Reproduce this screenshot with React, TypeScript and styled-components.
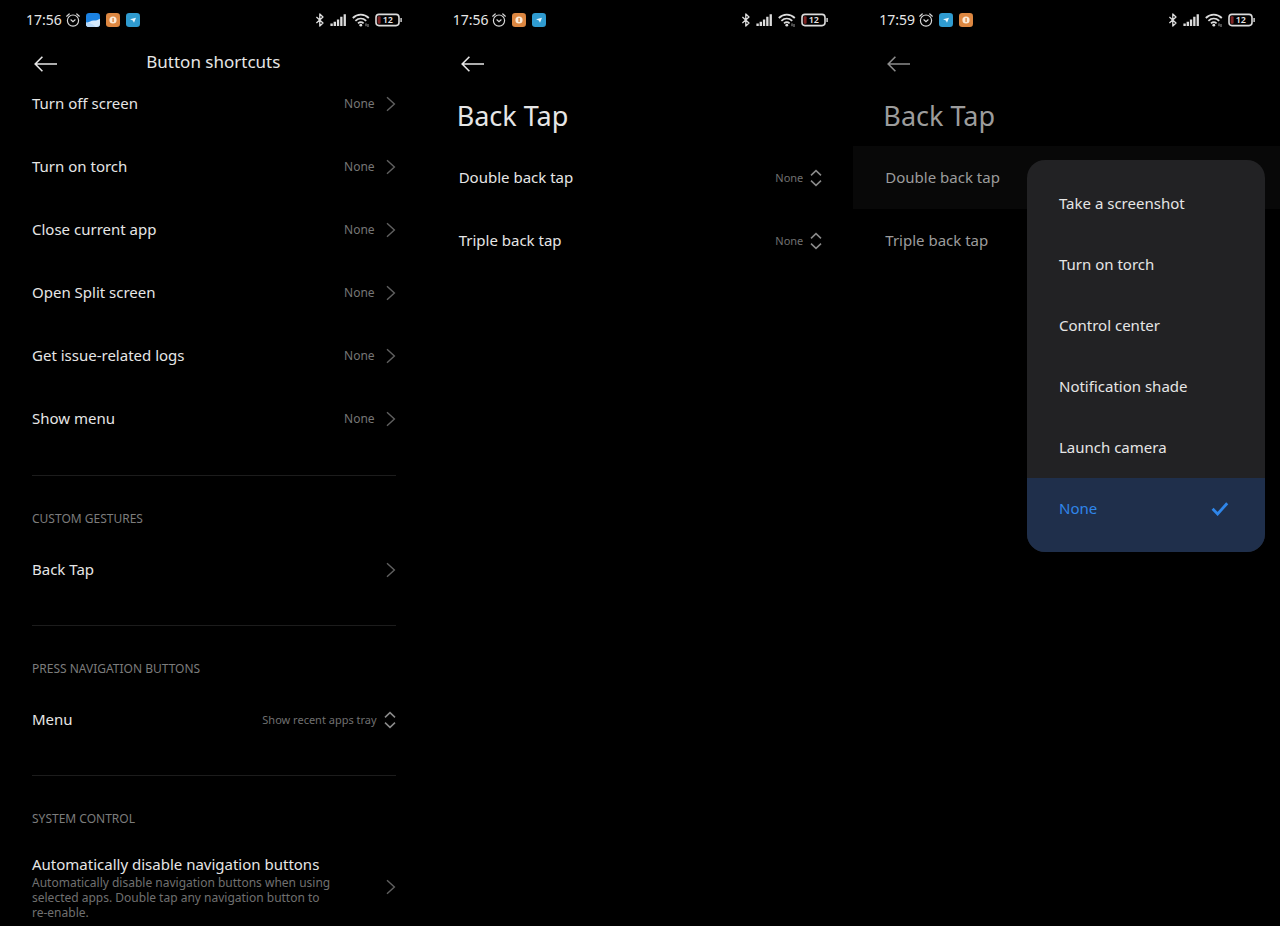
import React from "react";
import styled, { createGlobalStyle } from "styled-components";

const GlobalStyle = createGlobalStyle`
  * { box-sizing: border-box; }
  body {
    margin: 0;
    background: #000;
    color: #e6e6e6;
    font-family: "Noto Sans", "Open Sans", sans-serif;
    font-size: 15px;
    line-height: 21px;
  }
  button, select {
    font: inherit;
    color: inherit;
    background: none;
    border: 0;
    padding: 0;
    margin: 0;
  }
  a { color: inherit; text-decoration: none; }
  h1, h2, p, ul { margin: 0; padding: 0; font-weight: 400; }
  ul { list-style: none; }
`;

const Page = styled.div`
  display: grid;
  grid-template-columns: repeat(3, minmax(0, 1fr));
  min-height: 100vh;
`;

const Screen = styled.main`
  display: flex;
  flex-direction: column;
`;

const StatusBar = styled.div`
  display: flex;
  align-items: center;
  justify-content: space-between;
  height: 39px;
  padding: 0 24px 0 26px;
`;

const StatusGroup = styled.div<{ $gap: number }>`
  display: flex;
  align-items: center;
  gap: ${(p) => p.$gap}px;
  svg { display: block; }
`;

const Time = styled.time`
  font-size: 14px;
  line-height: 20px;
`;

const Header = styled.header<{ $dim?: boolean }>`
  display: grid;
  grid-template-columns: 28px 1fr 28px;
  align-items: center;
  height: 33px;
  padding: 12px 32px 0;
  color: ${(p) => (p.$dim ? "#8c8c8c" : "#e6e6e6")};
`;

const BackButton = styled.button`
  display: flex;
  align-items: center;
  height: 22px;
  padding-top: 3px;
`;

const HeaderTitle = styled.h1`
  font-size: 17px;
  line-height: 22px;
  text-align: center;
`;

const LargeTitle = styled.h1<{ $dim?: boolean }>`
  height: 74px;
  padding: 25px 30px 0;
  font-size: 27px;
  line-height: 38px;
  color: ${(p) => (p.$dim ? "#9c9c9c" : "#e6e6e6")};
`;

const Row = styled.div<{ $dim?: boolean; $pressed?: boolean }>`
  position: relative;
  display: flex;
  align-items: center;
  justify-content: space-between;
  height: 63px;
  padding: 0 31px 0 32px;
  color: ${(p) => (p.$dim ? "#9c9c9c" : "#e6e6e6")};
  background: ${(p) => (p.$pressed ? "#080808" : "transparent")};
`;

const ShortcutList = styled.nav`
  padding-bottom: 1px;
`;

const RowLink = styled.a`
  display: flex;
  align-items: center;
  justify-content: space-between;
  min-height: 63px;
  padding: 0 31px 0 32px;
`;

const TallRowLink = styled(RowLink)`
  padding-top: 16px;
  padding-bottom: 4px;
`;

const Value = styled.span`
  display: flex;
  align-items: center;
  gap: 11px;
  font-size: 12px;
  color: #767676;
`;

const Picker = styled.span`
  display: flex;
  align-items: center;
  gap: 7px;
  font-size: 11px;
  color: #707070;
  svg { color: #8a8a8a; }
`;

const Select = styled.select`
  width: 160px;
  appearance: none;
  text-align-last: right;
  outline: none;
`;

const Divider = styled.hr`
  width: calc(100% - 63px);
  height: 1px;
  margin: 24px 31px 0 32px;
  border: 0;
  background: #1c1c1c;
`;

const SectionTitle = styled.h2`
  height: 62px;
  padding: 34px 32px 0;
  font-size: 12px;
  line-height: 18px;
  color: #7c7c7c;
`;

const Description = styled.p`
  max-width: 304px;
  font-size: 12px;
  line-height: 15px;
  color: #707070;
`;

const Menu = styled.ul`
  position: absolute;
  z-index: 1;
  top: 14px;
  right: 15px;
  width: 238px;
  padding-top: 13px;
  overflow: hidden;
  border-radius: 18px;
  background: #222224;
  color: #e6e6e6;
`;

const MenuItem = styled.li<{ $selected?: boolean }>`
  padding-bottom: ${(p) => (p.$selected ? 13 : 0)}px;
  background: ${(p) => (p.$selected ? "#1f2f4b" : "transparent")};
  color: ${(p) => (p.$selected ? "#2f86ea" : "inherit")};
`;

const MenuButton = styled.button`
  display: flex;
  align-items: center;
  justify-content: space-between;
  width: 100%;
  height: 61px;
  padding: 0 36px 0 32px;
  text-align: left;
`;

const AlarmIcon = () => (
  <svg width="14" height="14" viewBox="0 0 14 14" fill="none" stroke="#d8d8d8" strokeWidth="1.2" strokeLinecap="round">
    <circle cx="7" cy="7.6" r="5.6" />
    <path d="M4.9 6.8 7 8.7 9.1 6.8M.7 3.2 3.2 1M13.3 3.2 10.8 1" />
  </svg>
);

const GalleryIcon = () => (
  <svg width="14" height="14" viewBox="0 0 14 14">
    <rect width="14" height="14" rx="3.2" fill="#1b82e2" />
    <path d="M0 9.6C3 10 5 7.4 8 7.6c2.4 0 3.6-.4 6-1.8v5A3.2 3.2 0 0 1 10.8 14H3.2A3.2 3.2 0 0 1 0 10.8z" fill="#d5e9fb" />
    <path d="M0 9.6c3 .6 6 .4 9.5 4.4H3.2A3.2 3.2 0 0 1 0 10.8z" fill="#b9d9f8" />
  </svg>
);

const CoinIcon = () => (
  <svg width="14" height="14" viewBox="0 0 14 14">
    <rect width="14" height="14" rx="3.2" fill="#dd8741" />
    <circle cx="7" cy="7" r="3.6" fill="#fbe9d6" />
    <path d="M6.4 5h1.4v4H6.4z" fill="#dd8741" />
  </svg>
);

const TelegramIcon = () => (
  <svg width="14" height="14" viewBox="0 0 14 14">
    <rect width="14" height="14" rx="3.2" fill="#2f9bd0" />
    <path d="M4 6.2 10 4.8 8 9.8 6.8 7.4z" fill="#e6f5fc" />
  </svg>
);

const BluetoothIcon = () => (
  <svg width="10" height="14" viewBox="0 0 10 14" fill="none" stroke="#dcdcdc" strokeWidth="1.3" strokeLinejoin="round">
    <path d="M1.4 4 8 10 4.8 13V1L8 4 1.4 10" />
  </svg>
);

const SignalIcon = () => (
  <svg width="17" height="12" viewBox="0 0 17 12" fill="#dcdcdc">
    <path d="M.4 9.6h2.4V12H.4zM3.6 7.8H6V12H3.6zM6.9 5.4h2.3V12H6.9zM10.2 2.8h2.3V12h-2.3zM13.6.2h2.3V12h-2.3z" />
  </svg>
);

const WifiIcon = () => (
  <svg width="18" height="14" viewBox="0 0 18 14" fill="none" stroke="#dcdcdc" strokeWidth="1.8">
    <path d="M.8 5C5.4.6 12.2.6 16.8 5M3.4 7.8c3.2-3 7.6-3 10.8 0M6 10.4c1.7-1.5 3.9-1.5 5.6 0" />
    <circle cx="8.8" cy="12.2" r="1.4" fill="#dcdcdc" stroke="none" />
    <path d="M14 10.4v2.8M16 11v3" stroke="#9a9a9a" strokeWidth="1" />
  </svg>
);

const BatteryIcon = () => (
  <svg width="28" height="14" viewBox="0 0 28 14">
    <rect x="1" y="1.4" width="23" height="11.2" rx="3" fill="none" stroke="#dcdcdc" strokeWidth="1.6" />
    <path d="M25.4 5h1.4v4h-1.4z" fill="#dcdcdc" />
    <rect x="2.6" y="3.2" width="3" height="7.6" rx="1" fill="#7c2222" />
    <text x="12.8" y="10.4" textAnchor="middle" fontFamily="Noto Sans, sans-serif" fontSize="9" fontWeight="600" fill="#e6e6e6">
      12
    </text>
  </svg>
);

const ArrowLeft = () => (
  <svg width="25" height="16" viewBox="0 0 25 16" fill="none" stroke="currentColor" strokeWidth="1.6">
    <path d="M10.4.8 3.2 8l7.2 7.2M3.4 8H25" />
  </svg>
);

const ChevronRight = () => (
  <svg width="10" height="16" viewBox="0 0 10 16" fill="none" stroke="#606060" strokeWidth="1.4">
    <path d="M1 1.2 8.4 8 1 14.8" />
  </svg>
);

const UpDown = () => (
  <svg width="12" height="18" viewBox="0 0 12 18" fill="none" stroke="currentColor" strokeWidth="1.5">
    <path d="M1 6.4 6 1.6l5 4.8M1 11.6l5 4.8 5-4.8" />
  </svg>
);

const CheckIcon = () => (
  <svg width="18" height="14" viewBox="0 0 18 14" fill="none" stroke="#2f86ea" strokeWidth="2.8">
    <path d="M1.6 6.8 6.6 12 16.2 1.2" />
  </svg>
);

const appIcons = { gallery: GalleryIcon, coin: CoinIcon, telegram: TelegramIcon };

function Status({ time, apps }: { time: string; apps: (keyof typeof appIcons)[] }) {
  return (
    <StatusBar>
      <StatusGroup $gap={4}>
        <Time>{time}</Time>
        <StatusGroup $gap={6}>
          <AlarmIcon />
          {apps.map((name) => {
            const Icon = appIcons[name];
            return <Icon key={name} />;
          })}
        </StatusGroup>
      </StatusGroup>
      <StatusGroup $gap={5}>
        <BluetoothIcon />
        <SignalIcon />
        <WifiIcon />
        <BatteryIcon />
      </StatusGroup>
    </StatusBar>
  );
}

function TopBar({ title, dim }: { title?: string; dim?: boolean }) {
  return (
    <Header $dim={dim}>
      <BackButton type="button" aria-label="Back">
        <ArrowLeft />
      </BackButton>
      {title && <HeaderTitle>{title}</HeaderTitle>}
    </Header>
  );
}

function PickerRow({ id, label, value, dim }: { id: string; label: string; value: string; dim?: boolean }) {
  return (
    <Row $dim={dim}>
      <label htmlFor={id}>{label}</label>
      <Picker>
        <Select id={id} defaultValue={value}>
          <option value={value}>{value}</option>
        </Select>
        <UpDown />
      </Picker>
    </Row>
  );
}

const shortcuts = [
  "Turn off screen",
  "Turn on torch",
  "Close current app",
  "Open Split screen",
  "Get issue-related logs",
  "Show menu",
];

const actions = ["Take a screenshot", "Turn on torch", "Control center", "Notification shade", "Launch camera", "None"];

export default function App() {
  return (
    <>
      <GlobalStyle />
      <Page>
        <Screen>
          <Status time="17:56" apps={["gallery", "coin", "telegram"]} />
          <TopBar title="Button shortcuts" />
          <ShortcutList>
            {shortcuts.map((label) => (
              <RowLink href="#" key={label}>
                <span>{label}</span>
                <Value>
                  None
                  <ChevronRight />
                </Value>
              </RowLink>
            ))}
          </ShortcutList>
          <Divider />
          <SectionTitle>CUSTOM GESTURES</SectionTitle>
          <RowLink href="#">
            <span>Back Tap</span>
            <ChevronRight />
          </RowLink>
          <Divider />
          <SectionTitle>PRESS NAVIGATION BUTTONS</SectionTitle>
          <PickerRow id="menu-press" label="Menu" value="Show recent apps tray" />
          <Divider />
          <SectionTitle>SYSTEM CONTROL</SectionTitle>
          <TallRowLink href="#">
            <div>
              <div>Automatically disable navigation buttons</div>
              <Description>
                Automatically disable navigation buttons when using selected apps. Double tap any navigation button to
                re-enable.
              </Description>
            </div>
            <ChevronRight />
          </TallRowLink>
        </Screen>

        <Screen>
          <Status time="17:56" apps={["coin", "telegram"]} />
          <TopBar />
          <LargeTitle>Back Tap</LargeTitle>
          <PickerRow id="double-tap" label="Double back tap" value="None" />
          <PickerRow id="triple-tap" label="Triple back tap" value="None" />
        </Screen>

        <Screen>
          <Status time="17:59" apps={["telegram", "coin"]} />
          <TopBar dim />
          <LargeTitle $dim>Back Tap</LargeTitle>
          <Row $dim $pressed>
            <button type="button" aria-haspopup="listbox" aria-expanded="true">
              Double back tap
            </button>
            <Menu role="listbox" aria-label="Double back tap">
              {actions.map((action) => (
                <MenuItem key={action} $selected={action === "None"} role="option" aria-selected={action === "None"}>
                  <MenuButton type="button">
                    {action}
                    {action === "None" && <CheckIcon />}
                  </MenuButton>
                </MenuItem>
              ))}
            </Menu>
          </Row>
          <Row $dim>
            <button type="button">Triple back tap</button>
          </Row>
        </Screen>
      </Page>
    </>
  );
}
